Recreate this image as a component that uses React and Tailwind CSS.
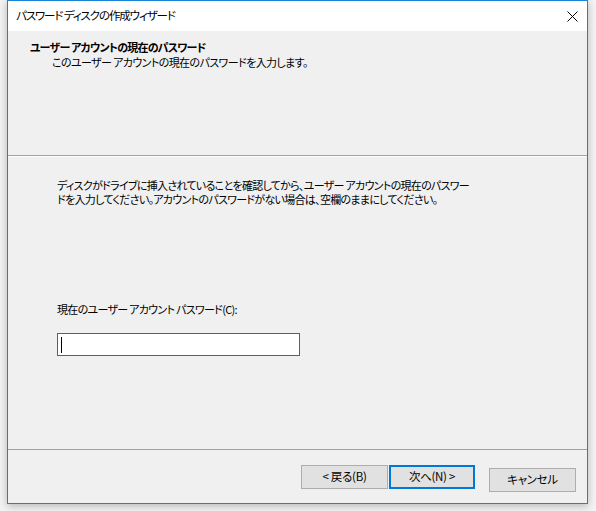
import React from 'react';

const jp = "font-['Noto_Sans_CJK_JP',sans-serif] [font-feature-settings:'palt']";

const Button = ({ children, primary }) => (
	<button
		className={
			primary
				? 'h-[24px] w-[86px] bg-[#e1e1e1] border-2 border-[#0078d7] text-[11.5px] tracking-[-0.3px] text-black'
				: 'h-[24px] w-[87px] bg-[#e1e1e1] border border-[#adadad] text-[11.5px] tracking-[-0.3px] text-black'
		}
	>
		{children}
	</button>
);

const App = () => {
	return (
		<div className={`w-[596px] h-[511px] bg-[#f3f3f3] overflow-hidden ${jp}`}>
			<div className="ml-[7px] w-[581px] h-[504px] border border-[#1883d7] bg-[#f0f0f0] flex flex-col shadow-[0_2px_8px_rgba(0,0,0,0.25)]">
				{/* title bar */}
				<div className="h-[30px] bg-white flex items-center justify-between pl-[8px] pr-[9px]">
					<span className="text-[11.5px] tracking-[-1.1px] text-black leading-none">パスワード ディスクの作成ウィザード</span>
					<svg width="11" height="11" viewBox="0 0 11 11">
						<path d="M0.5 0.5 L10.5 10.5 M10.5 0.5 L0.5 10.5" stroke="#000" strokeWidth="1" />
					</svg>
				</div>

				{/* header */}
				<div className="h-[124px] pt-[9px] text-[11px] tracking-[-0.6px] leading-[15px] text-black">
					<div className="pl-[22px] font-bold tracking-[-0.8px]">ユーザー アカウントの現在のパスワード</div>
					<div className="pl-[44px]">このユーザー アカウントの現在のパスワードを入力します。</div>
				</div>
				<div className="h-px bg-[#a0a0a0]" />
				<div className="h-px bg-white" />

				{/* body */}
				<div className="flex-1 pl-[49px] pt-[21px] text-[11px] tracking-[-0.7px] text-black">
					<p className="leading-[14px] whitespace-nowrap">
						ディスクがドライブに挿入されていることを確認してから、ユーザー アカウントの現在のパスワー
						<br />
						ドを入力してください。アカウントのパスワードがない場合は、空欄のままにしてください。
					</p>
					<div className="mt-[96px] leading-[14px]">現在のユーザー アカウント パスワード(C):</div>
					<div className="mt-[17px] w-[243px] h-[23px] bg-white border border-[#0078d7] flex items-center pl-[3px]">
						<div className="w-px h-[16px] bg-black" />
					</div>
				</div>

				{/* footer */}
				<div className="h-px bg-[#a0a0a0]" />
				<div className="h-[53px] flex justify-end items-start pt-[15px] pr-[11px]">
					<div className="flex gap-[1px]">
						<Button>&lt; 戻る(B)</Button>
						<Button primary>次へ(N) &gt;</Button>
					</div>
					<div className="ml-[14px]">
						<Button>キャンセル</Button>
					</div>
				</div>
			</div>
		</div>
	);
};

export default App;
